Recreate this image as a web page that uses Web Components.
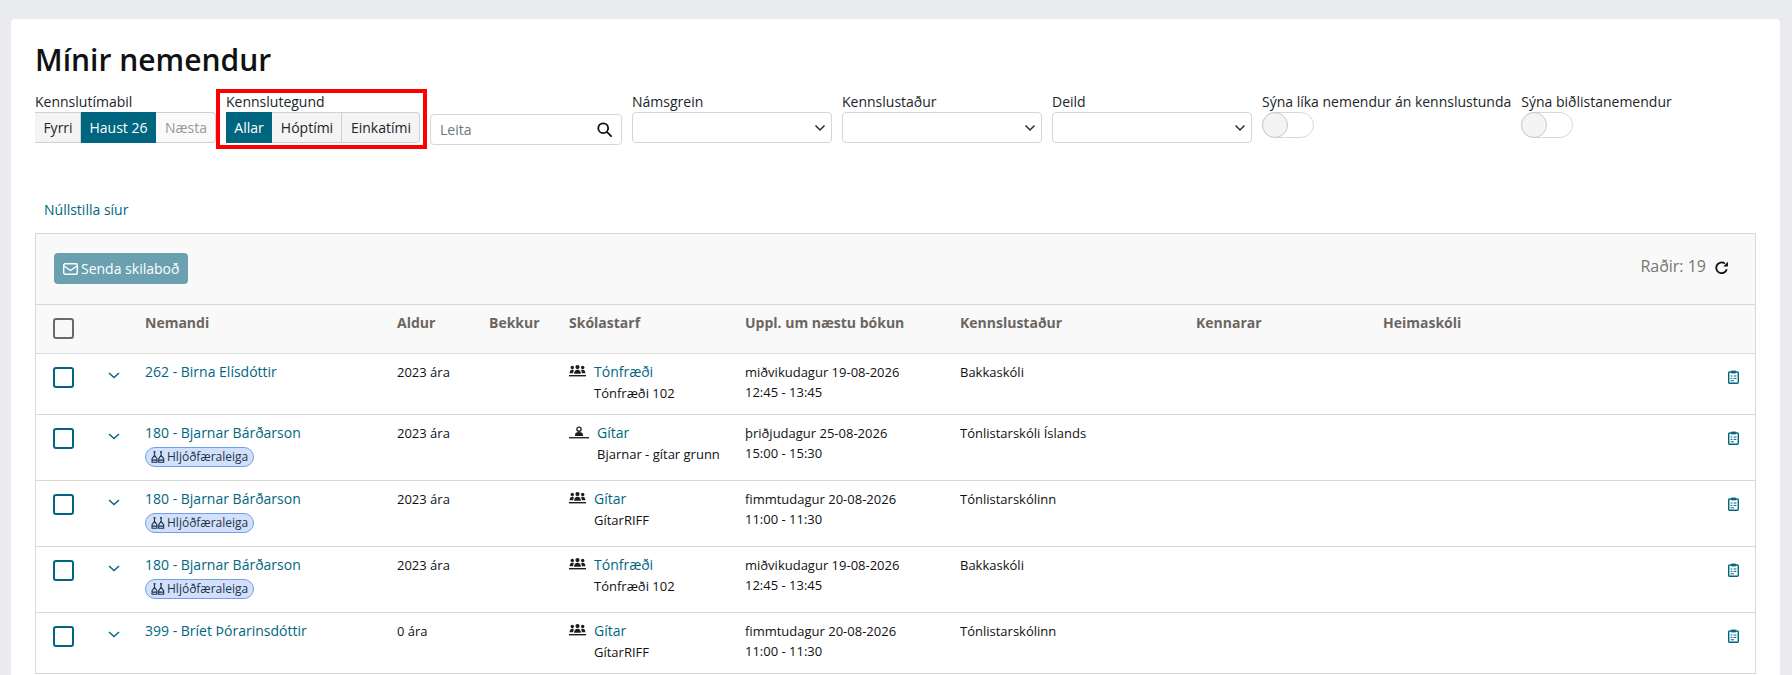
<!DOCTYPE html>
<html lang="is">
<head>
<meta charset="utf-8">
<title>Mínir nemendur</title>
<style>
html, body { margin: 0; height: 675px; overflow: hidden; }
body {
    background: #e9ebef;
    font-family: "Open Sans", "Liberation Sans", sans-serif;
    font-size: 14px;
    color: #212529;
}
</style>
</head>
<body>

<page-card heading="Mínir nemendur">
    <filter-bar>
        <filter-field label="Kennslutímabil" style="width:181px">
            <seg-group options="Fyrri|Haust 26|Næsta" active="1" disabled="2" widths="46|75|60"></seg-group>
        </filter-field>
        <marked-box>
            <filter-field label="Kennslutegund" style="width:194px">
                <seg-group options="Allar|Hóptími|Einkatími" active="0" widths="46|70|78"></seg-group>
            </filter-field>
        </marked-box>
        <search-box placeholder="Leita"></search-box>
        <filter-field label="Námsgrein" style="width:200px"><select-box></select-box></filter-field>
        <filter-field label="Kennslustaður" style="width:200px"><select-box></select-box></filter-field>
        <filter-field label="Deild" style="width:200px"><select-box></select-box></filter-field>
        <filter-field label="Sýna líka nemendur án kennslustunda"><toggle-switch></toggle-switch></filter-field>
        <filter-field label="Sýna biðlistanemendur"><toggle-switch></toggle-switch></filter-field>
    </filter-bar>
    <reset-link>Núllstilla síur</reset-link>
    <student-table count="19">
        <student-row name="262 - Birna Elísdóttir" age="2023 ára" kind="group" activity="Tónfræði" sub="Tónfræði 102" date="miðvikudagur 19-08-2026" time="12:45 - 13:45" place="Bakkaskóli"></student-row>
        <student-row name="180 - Bjarnar Bárðarson" badge="Hljóðfæraleiga" age="2023 ára" kind="single" activity="Gítar" sub="Bjarnar - gítar grunn" date="þriðjudagur 25-08-2026" time="15:00 - 15:30" place="Tónlistarskóli Íslands"></student-row>
        <student-row name="180 - Bjarnar Bárðarson" badge="Hljóðfæraleiga" age="2023 ára" kind="group" activity="Gítar" sub="GítarRIFF" date="fimmtudagur 20-08-2026" time="11:00 - 11:30" place="Tónlistarskólinn"></student-row>
        <student-row name="180 - Bjarnar Bárðarson" badge="Hljóðfæraleiga" age="2023 ára" kind="group" activity="Tónfræði" sub="Tónfræði 102" date="miðvikudagur 19-08-2026" time="12:45 - 13:45" place="Bakkaskóli"></student-row>
        <student-row name="399 - Bríet Þórarinsdóttir" age="0 ára" kind="group" activity="Gítar" sub="GítarRIFF" date="fimmtudagur 20-08-2026" time="11:00 - 11:30" place="Tónlistarskólinn"></student-row>
    </student-table>
</page-card>

<script>
const TEAL = '#00667f';
const COLUMNS = '109px 252px 92px 80px 176px 215px 236px 187px 1fr';

class PageCard extends HTMLElement {
    constructor() {
        super();
        this.attachShadow({ mode: 'open' });
        this.shadowRoot.innerHTML = `
<style>
:host {
    display: block;
    box-sizing: border-box;
    margin: 19px 12px 0 11px;
    padding: 21px 24px 0;
    height: 656px;
    overflow: hidden;
    background: #fff;
    border-radius: 4px 4px 0 0;
}
h1 {
    margin: 0 0 12px;
    font-size: 30px;
    line-height: 40px;
    font-weight: 600;
    color: #111;
}
</style>
<h1>${this.getAttribute('heading')}</h1>
<slot></slot>`;
    }
}

class FilterBar extends HTMLElement {
    constructor() {
        super();
        this.attachShadow({ mode: 'open' });
        this.shadowRoot.innerHTML = `
<style>
:host { display: flex; align-items: flex-start; gap: 10px; }
</style>
<slot></slot>`;
    }
}

class FilterField extends HTMLElement {
    constructor() {
        super();
        this.attachShadow({ mode: 'open' });
        this.shadowRoot.innerHTML = `
<style>
:host { display: block; flex: none; }
label { display: block; height: 20px; font-size: 14px; line-height: 20px; white-space: nowrap; }
</style>
<label>${this.getAttribute('label')}</label>
<slot></slot>`;
    }
}

// the red frame lies over the filter, it is not part of the layout
class MarkedBox extends HTMLElement {
    constructor() {
        super();
        this.attachShadow({ mode: 'open' });
        this.shadowRoot.innerHTML = `
<style>
:host { display: block; flex: none; position: relative; }
.frame {
    position: absolute;
    top: -3px; right: -7px; bottom: -6px; left: -10px;
    border: 4px solid #fe0000;
    pointer-events: none;
}
</style>
<slot></slot>
<div class="frame"></div>`;
    }
}

class SegGroup extends HTMLElement {
    constructor() {
        super();
        this.attachShadow({ mode: 'open' });
        const widths = this.getAttribute('widths').split('|');
        const active = this.getAttribute('active');
        const disabled = this.getAttribute('disabled');
        const buttons = this.getAttribute('options').split('|').map((text, i) => {
            const cls = String(i) === active ? 'on' : String(i) === disabled ? 'off' : '';
            return `<button class="${cls}" style="width:${widths[i]}px">${text}</button>`;
        }).join('');
        this.shadowRoot.innerHTML = `
<style>
:host { display: flex; height: 31px; }
button {
    box-sizing: border-box;
    height: 31px;
    padding: 0 0 0 1px;
    font: 14px "Open Sans", "Liberation Sans", sans-serif;
    color: #212529;
    background: #f4f4f4;
    border: 1px solid #d0d0d0;
    border-left: 0;
}
button:first-child { border-left: 1px solid #d0d0d0; border-radius: 4px 0 0 4px; }
button:last-child { border-radius: 0 4px 4px 0; }
button.on { background: ${TEAL}; border-color: ${TEAL}; color: #fff; }
button.off { background: #fafafa; color: #999; }
</style>
${buttons}`;
    }
}

class SearchBox extends HTMLElement {
    constructor() {
        super();
        this.attachShadow({ mode: 'open' });
        this.shadowRoot.innerHTML = `
<style>
:host {
    display: flex;
    flex: none;
    box-sizing: border-box;
    align-items: center;
    justify-content: space-between;
    width: 192px;
    height: 31px;
    margin-top: 22px;
    padding: 0 9px;
    border: 1px solid #d6d6d6;
    border-radius: 4px;
    font-size: 14px;
    color: #6c757d;
}
svg { display: block; }
</style>
<span>${this.getAttribute('placeholder')}</span>
<svg width="15" height="15" viewBox="0 0 14 14" fill="none" stroke="#111" stroke-width="1.7">
    <circle cx="5.8" cy="5.8" r="4.6"/><path d="M9.2 9.2L13.2 13.2" stroke-linecap="round"/>
</svg>`;
    }
}

class SelectBox extends HTMLElement {
    constructor() {
        super();
        this.attachShadow({ mode: 'open' });
        this.shadowRoot.innerHTML = `
<style>
:host {
    display: flex;
    box-sizing: border-box;
    align-items: center;
    justify-content: flex-end;
    height: 31px;
    padding-right: 5px;
    border: 1px solid #d6d6d6;
    border-radius: 4px;
}
</style>
<svg width="12" height="8" viewBox="0 0 12 8" fill="none" stroke="#222b36" stroke-width="1.5">
    <path d="M1.5 1.5L6 6L10.5 1.5"/>
</svg>`;
    }
}

class ToggleSwitch extends HTMLElement {
    constructor() {
        super();
        this.attachShadow({ mode: 'open' });
        this.shadowRoot.innerHTML = `
<style>
:host {
    display: block;
    box-sizing: border-box;
    position: relative;
    width: 52px;
    height: 26px;
    border: 1px solid #d8d8d8;
    border-radius: 13px;
    background: #fff;
}
.knob {
    position: absolute;
    left: -1px; top: -1px;
    box-sizing: border-box;
    width: 26px; height: 26px;
    border: 1px solid #c8c8c8;
    border-radius: 50%;
    background: #f4f4f4;
}
</style>
<div class="knob"></div>`;
    }
}

class ResetLink extends HTMLElement {
    constructor() {
        super();
        this.attachShadow({ mode: 'open' });
        this.shadowRoot.innerHTML = `
<style>
:host {
    display: block;
    margin: 55px 0 13px 9px;
    font-size: 14px;
    line-height: 20px;
    color: ${TEAL};
}
</style>
<slot></slot>`;
    }
}

class StudentTable extends HTMLElement {
    constructor() {
        super();
        this.attachShadow({ mode: 'open' });
        const heads = ['Nemandi', 'Aldur', 'Bekkur', 'Skólastarf', 'Uppl. um næstu bókun', 'Kennslustaður', 'Kennarar', 'Heimaskóli']
            .map(t => `<div class="th">${t}</div>`).join('');
        this.shadowRoot.innerHTML = `
<style>
:host {
    display: block;
    border: 1px solid #d8d8d8;
    border-bottom: 0;
}
.toolbar {
    display: flex;
    align-items: flex-start;
    justify-content: space-between;
    box-sizing: border-box;
    height: 71px;
    padding: 0 26px 0 18px;
    background: #f9f9f9;
    border-bottom: 1px solid #d8d8d8;
}
button {
    display: flex;
    align-items: center;
    gap: 3px;
    box-sizing: border-box;
    width: 134px;
    height: 31px;
    margin-top: 19px;
    padding: 0 0 0 9px;
    font: 14px "Open Sans", "Liberation Sans", sans-serif;
    font-weight: 500;
    color: #fff;
    background: #6ba0b1;
    border: 0;
    border-radius: 4px;
}
.count { display: flex; align-items: center; gap: 8px; margin-top: 21px; font-size: 16px; line-height: 22px; color: #757575; }
.count svg { margin-top: 3px; }
.head {
    display: grid;
    grid-template-columns: ${COLUMNS};
    box-sizing: border-box;
    height: 49px;
    background: #f9f9f9;
    border-bottom: 1px solid #d8d8d8;
}
.box {
    box-sizing: border-box;
    width: 21px; height: 21px;
    margin: 13px 0 0 17px;
    border: 2px solid #6a6a6a;
    border-radius: 3px;
}
.th { padding-top: 8px; font-size: 14px; line-height: 20px; font-weight: 700; color: #6b6561; white-space: nowrap; }
</style>
<div class="toolbar">
    <button>
        <svg width="15" height="12" viewBox="0 0 15 12" fill="none" stroke="#fff" stroke-width="1.4">
            <rect x="0.7" y="0.7" width="13.6" height="10.6" rx="1.5"/><path d="M1 3L7.5 7.5L14 3"/>
        </svg>
        <span>Senda skilaboð</span>
    </button>
    <div class="count">
        <span>Raðir: ${this.getAttribute('count')}</span>
        <svg width="15" height="15" viewBox="0 0 14 14" fill="none" stroke="#111" stroke-width="1.7">
            <path d="M11.9 8.6A5 5 0 1 1 10.2 3.4"/><path d="M8.7 6H13V1.7Z" fill="#111" stroke="none"/>
        </svg>
    </div>
</div>
<div class="head"><div><div class="box"></div></div>${heads}</div>
<slot></slot>`;
    }
}

const ICONS = {
    group: `<svg width="17" height="12" viewBox="0 0 17 12" fill="#1c1c1c">
        <circle cx="8.5" cy="2.1" r="2.1"/><circle cx="3.3" cy="2.5" r="1.7"/><circle cx="13.7" cy="2.5" r="1.7"/>
        <path d="M5.1 8.8C5.1 6 6.5 4.7 8.5 4.7S11.9 6 11.9 8.8Z"/>
        <path d="M0.6 8.2C0.6 5.8 1.8 4.7 3.3 4.7C3.9 4.7 4.4 4.8 4.9 5.1C4.4 6 4.2 7 4.2 8.2Z"/>
        <path d="M16.4 8.2C16.4 5.8 15.2 4.7 13.7 4.7C13.1 4.7 12.6 4.8 12.1 5.1C12.6 6 12.8 7 12.8 8.2Z"/>
        <rect x="0" y="10" width="17" height="1.4"/>
    </svg>`,
    single: `<svg width="20" height="13" viewBox="0 0 21 13" fill="none" stroke="#1c1c1c" stroke-width="1.4">
        <circle cx="10.5" cy="3" r="2.2"/>
        <path d="M7 9.4C7 7.6 8 6.8 10.5 6.8S14 7.6 14 9.4Z" fill="#1c1c1c"/>
        <path d="M0 12H21" stroke-width="1.4"/>
    </svg>`,
    bottles: `<svg width="14" height="14" viewBox="0 0 16 14" fill="none" stroke="#1d3350" stroke-width="1.3">
        <path d="M4 1V5L1.2 9V13H6.8V9L4 5Z"/><path d="M11.5 1V5L8.8 9V13H14.5V9L11.5 5Z"/>
        <path d="M1.2 10.5H6.8M8.8 10.5H14.5"/><path d="M3 1H5M10.5 1H12.5" stroke-width="1.6"/>
    </svg>`,
    clip: `<svg width="11" height="14" viewBox="0 0 11 14" fill="none" stroke="${TEAL}" stroke-width="1.4">
        <rect x="0.7" y="2" width="9.6" height="11.3" rx="1"/>
        <rect x="3.2" y="0.6" width="4.6" height="2.8" fill="${TEAL}" stroke="none"/>
        <path d="M2.6 6H4.4M5.6 6H8.4M2.6 8.4H4.4M5.6 8.4H8.4M2.6 10.8H6" stroke-width="1"/>
    </svg>`
};

class StudentRow extends HTMLElement {
    constructor() {
        super();
        this.attachShadow({ mode: 'open' });
        const a = name => this.getAttribute(name);
        const badge = a('badge')
            ? `<status-badge label="${a('badge')}"></status-badge>`
            : '';
        this.shadowRoot.innerHTML = `
<style>
:host {
    display: grid;
    grid-template-columns: ${COLUMNS};
    box-sizing: border-box;
    padding: 8px 0 10px;
    border-bottom: 1px solid #d8d8d8;
    background: #fff;
    font-size: 13px;
    line-height: 20px;
    color: #111;
}
.pick { display: flex; padding-top: 5px; }
.box {
    box-sizing: border-box;
    width: 21px; height: 21px;
    margin-left: 17px;
    border: 2px solid ${TEAL};
    border-radius: 3px;
}
.chev { margin: 5px 0 0 34px; }
.name { color: ${TEAL}; font-size: 14px; white-space: nowrap; }
.activity { display: flex; gap: 8px; white-space: nowrap; }
.activity svg { flex: none; margin-top: 3px; }
.activity .link { color: ${TEAL}; font-size: 14px; }
.sub { line-height: 22px; }
.tools { display: flex; justify-content: flex-end; padding: 8px 16px 0 0; }
</style>
<div class="pick">
    <div class="box"></div>
    <svg class="chev" width="12" height="7" viewBox="0 0 12 7" fill="none" stroke="${TEAL}" stroke-width="1.4"><path d="M1 1L6 5.6L11 1"/></svg>
</div>
<div><div class="name">${a('name')}</div>${badge}</div>
<div>${a('age')}</div>
<div></div>
<div class="activity">${ICONS[a('kind')]}<div><div class="link">${a('activity')}</div><div class="sub">${a('sub')}</div></div></div>
<div>${a('date')}<br>${a('time')}</div>
<div>${a('place')}</div>
<div></div>
<div class="tools">${ICONS.clip}</div>`;
    }
}

class StatusBadge extends HTMLElement {
    constructor() {
        super();
        this.attachShadow({ mode: 'open' });
        this.shadowRoot.innerHTML = `
<style>
:host {
    display: flex;
    align-items: center;
    gap: 2px;
    box-sizing: border-box;
    width: 109px;
    height: 20px;
    margin: 4px 0 3px;
    padding-left: 5px;
    background: #d2e1f9;
    border: 1px solid #6f9fea;
    border-radius: 10px;
    font-size: 12px;
    line-height: 18px;
    color: #1d3350;
    white-space: nowrap;
}
</style>
${ICONS.bottles}<span>${this.getAttribute('label')}</span>`;
    }
}

customElements.define('page-card', PageCard);
customElements.define('filter-bar', FilterBar);
customElements.define('filter-field', FilterField);
customElements.define('marked-box', MarkedBox);
customElements.define('seg-group', SegGroup);
customElements.define('search-box', SearchBox);
customElements.define('select-box', SelectBox);
customElements.define('toggle-switch', ToggleSwitch);
customElements.define('reset-link', ResetLink);
customElements.define('student-table', StudentTable);
customElements.define('student-row', StudentRow);
customElements.define('status-badge', StatusBadge);
</script>
</body>
</html>
